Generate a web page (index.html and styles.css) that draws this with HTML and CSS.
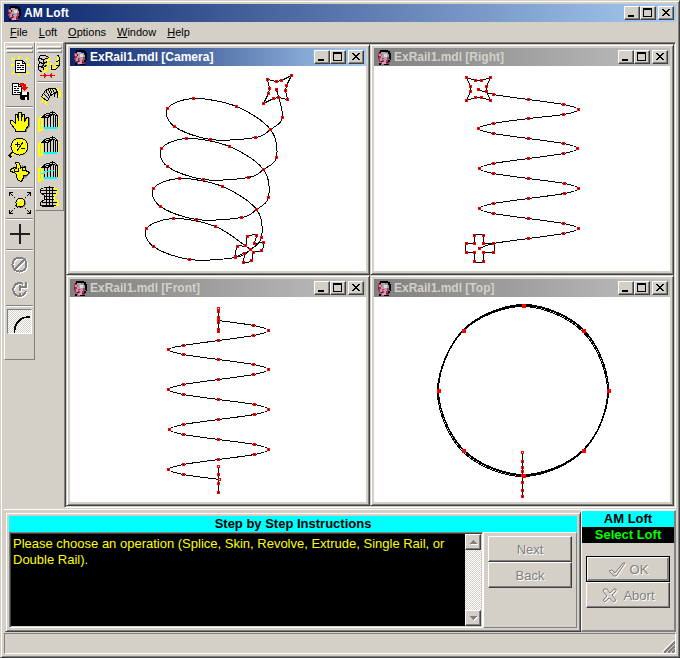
FILE: index.html
```html
<!DOCTYPE html>
<html lang="en">
<head>
<meta charset="utf-8">
<title>AM Loft</title>
<link rel="stylesheet" href="styles.css">
</head>
<body>
<svg class="defs" aria-hidden="true">
  <symbol id="logo" viewBox="0 0 16 16">
    <path fill="#a03a5c" d="M2 4h3v9H3v-2H2zM4 11h9v4H5v-2H4z"/>
    <path fill="#e58aa6" d="M3 5h2v2H3zM5 3h4v2H5zM4 9h2v3H4zM8 11h2v2H8z"/>
    <path fill="#000" d="M4 1h8v1h2v2h1v7h-1v-1h-1V5h-1V3H5v1H3V3h1z"/>
    <path fill="#a7a7a7" d="M6 4h6v2h1v4h-2v1H7v-1H5V7h1z"/>
    <path fill="#d8dcd8" d="M8 5h3v3H8z"/>
    <path fill="#d02a72" d="M11 8h2v3h-2zM6 9h2v1H6zM3 8h1v2H3z"/>
    <path fill="#5a1830" d="M5 12h2v1H5zM10 13h3v1h-3zM2 7h1v2H2z"/>
    <path fill="#d8a0b0" d="M6 13h4v2H6z"/>
    <path fill="#000" d="M3 14h2v2H3zM12 11h2v2h-2zM8 15h5v1H8z"/>
  </symbol>
  <symbol id="min" viewBox="0 0 12 10"><path fill="currentColor" d="M2 7h6v2H2z"/></symbol>
  <symbol id="max" viewBox="0 0 12 10"><path fill="currentColor" fill-rule="evenodd" d="M1 0h9v9H1zM2 2v6h7V2z"/></symbol>
  <symbol id="close" viewBox="0 0 12 10"><path fill="currentColor" d="M2 1h2v1h1v1h2V2h1V1h2v1H9v1H8v1H7v1h1v1h1v1h1v1H8V7H7V6H5v1H4v1H2V7h1V6h1V5h1V4H4V3H3V2H2z"/></symbol>
  <symbol id="loft" viewBox="0 0 25 25">
    <path class="cyan" d="M5 17h15v2H5z"/>
    <path class="yel" d="M2 8v14M2 8l3-1M3 21l3-3M5 9v9M21 7v10"/>
    <path class="ink" d="M4.500 7.500l5-4h3l3-2 3 2 2 2v11M4.500 7.500h7l4-3 5 1M7.500 7v10M10.500 8v9M13.500 6v11M16.500 5v12M18.500 5v12M9.500 3.500l6 1M12.500 3.500l-1 4M15.500 1.500v3M6.500 6.500l5-1"/>
  </symbol>
</svg>

<div class="window">
  <header class="titlebar">
    <svg class="logo"><use href="#logo"/></svg>
    <h1>AM Loft</h1>
    <div class="controls">
      <button type="button" aria-label="Minimize"><svg><use href="#min"/></svg></button>
      <button type="button" aria-label="Maximize"><svg><use href="#max"/></svg></button>
      <button type="button" class="close" aria-label="Close"><svg><use href="#close"/></svg></button>
    </div>
  </header>

  <nav class="menu">
    <button type="button"><u>F</u>ile</button>
    <button type="button"><u>L</u>oft</button>
    <button type="button"><u>O</u>ptions</button>
    <button type="button"><u>W</u>indow</button>
    <button type="button"><u>H</u>elp</button>
  </nav>

  <main class="workspace">
    <div class="toolbar toolbar-main" role="toolbar" aria-label="View">
      <span class="grip"></span><span class="grip"></span>
      <button type="button" aria-label="New"><svg viewBox="0 0 25 25">
        <path class="yel" stroke-dasharray="3 1" d="M5 4l3 3M12 2v4M21 4l-3 3M4 11h4M20 11h3M5 20l3-3M12 19v3M22 20l-4-4"/>
        <path fill="#fff" stroke="#000" d="M8.500 6.500h7l3 3v9h-10z"/><path class="ink" d="M15.500 6v3.500h3"/>
        <path class="ink" d="M10 9.500h3M10 11.500h2M13 11.500h4M10 13.500h4M15 13.500h2M10 15.500h2M13 15.500h4"/></svg></button>
      <button type="button" aria-label="Save"><svg viewBox="0 0 25 25">
        <path fill="#fff" stroke="#000" d="M5.500 4.500h6l3 3v8h-9z"/>
        <path class="ink" d="M7 7.500h3M7 9.500h2M10 9.500h2M7 11.500h5M7 13.500h2M10 13.500h3M11.500 4v3.500h3"/>
        <path fill="red" d="M13 4h4v1h2v3h2v1h-1v1h-1v1h-1v1h-1v-1h-1v-1h-1v-1h-1V8h2V7h-3z"/>
        <path fill="#000" d="M13 13h9v8h-8v-1h-1z"/><path fill="#fff" d="M15 13h5v3h-5zM18 18h2v3h-2z"/></svg></button>
      <hr>
      <button type="button" aria-label="Pan"><svg viewBox="0 0 25 25">
        <path fill="#808080" d="M22 8h1v8l-3 4v2h-2z"/>
        <path fill="#ff0" stroke="#000" d="M8.500 21.500v-2l-5-6v-3h2l3 3v-9h2l1 6v-8h3v8l1-6h2v7l2-4h2v8l-3 4v2z"/></svg></button>
      <button type="button" aria-label="Zoom"><svg viewBox="0 0 25 25">
        <path stroke="#000" stroke-width="3" d="M2 22l5-5"/><path class="yel" d="M4 21l3-3"/>
        <circle cx="13" cy="12" r="8.500" fill="#808080"/>
        <circle cx="12.500" cy="11.500" r="8.500" fill="#ff0" stroke="#000"/>
        <path fill="none" stroke="#fff" d="M6 9l3-3"/>
        <path class="ink" d="M8 9.500h5M10.500 7v5M10 16l6-9M14 13.500h4"/></svg></button>
      <button type="button" aria-label="Rotate"><svg viewBox="0 0 25 25">
        <path fill="#808080" d="M15 5l4 4 4 5-5 4-5 4v-3z"/>
        <path fill="#ff0" stroke="#000" d="M8.500 2.500h3l2 3v2h3l2-1v4l4 2-3 3h-3v2l-2 4-3-1-2-3v-3l-2-2-4-1v-2l4-2 2 1v-3z"/>
        <path class="ink" d="M7.500 9v2.500h4V8M15.500 7v3.500h4M13.500 6v3"/></svg></button>
      <hr>
      <button type="button" aria-label="Fit to window"><svg viewBox="0 0 25 25">
        <path stroke="#000" stroke-width="3" d="M9 16l2-2"/>
        <circle cx="14" cy="12" r="5" fill="#808080"/>
        <circle cx="13.500" cy="11.500" r="4.500" fill="#ff0" stroke="#000"/><path stroke="#fff" stroke-width="2" d="M11 10h2"/>
        <path fill="#000" d="M2 1h4v1H4v1H3v2H2zM24 1h-4v1h2v1h1v2h1zM2 23h4v-1H4v-1H3v-2H2zM24 23h-4v-1h2v-1h1v-2h1z"/>
        <path class="ink" stroke-dasharray="3 1" d="M4 3l4 4M22 3l-4 4M4 21l4-4M22 21l-4-4"/></svg></button>
      <hr>
      <button type="button" aria-label="Add"><svg viewBox="0 0 25 25">
        <path fill="none" stroke="#202020" stroke-width="2" d="M13 2v20M3 12h20"/></svg></button>
      <hr>
      <button type="button" disabled aria-label="Cancel"><svg viewBox="0 0 25 25">
        <g fill="none" stroke="#fff" stroke-width="2"><circle cx="13.500" cy="12.500" r="7"/><path d="M9 17l9-9"/></g>
        <g fill="none" stroke="#808080" stroke-width="2"><circle cx="12.500" cy="11.500" r="7"/><path d="M8 16l9-9"/></g></svg></button>
      <button type="button" disabled aria-label="Refresh"><svg viewBox="0 0 25 25">
        <g fill="none" stroke="#fff" stroke-width="2"><path d="M17 7a6.500 6.500 0 1 0 3 7M15 10h5V5M14 8v6M14 16v2"/></g>
        <g fill="none" stroke="#808080" stroke-width="2"><path d="M16 6a6.500 6.500 0 1 0 3 7M14 9h5V4M13 7v6M13 15v2"/></g></svg></button>
      <hr>
      <button type="button" class="pressed" aria-label="Smooth curve" aria-pressed="true"><svg viewBox="0 0 25 25">
        <path fill="none" stroke="#000" stroke-width="2" d="M7 25v-3C8 14 14 8 20 8h4"/></svg></button>
    </div>

    <div class="toolbar toolbar-loft" role="toolbar" aria-label="Loft">
      <span class="grip"></span><span class="grip"></span>
      <button type="button" aria-label="Splice"><svg viewBox="0 0 25 25">
        <path class="yel" d="M13 4l-3 3 1 3-3 3 2 2-4 4M21 2v5l-2 5-5 5M14 9v6"/>
        <path class="ink" d="M12.500 3.500l-5-2h-4l-2 3 1 4-1 3v4l4 3M2.500 4.500l4 1 6-2M2.500 8.500l4 1 4-2M2.500 12.500l4 1 4-3M6.500 5.500v4l-1 4 2 3M22.500 2.500v9l-4 4h-4v-5M22.500 6.500l-3 1M18.500 11.500l4 0M20.500 1.500l2 1"/>
        <path fill="red" d="M3 21h4v-2l3 2h1v1h-1l-3 2v-2H3zM18 21h-3v-2l-3 2h-1v1h1l3 2v-2h3z"/></svg></button>
      <hr>
      <button type="button" aria-label="Skin"><svg viewBox="0 0 25 25">
        <path class="yel" d="M5 11l2 3-3 4M8 16l2 4M12 4h8l3 3v4l-3 1"/>
        <path class="ink" d="M4.500 11.500l4-6 4-2h6M10.500 16.500l2-5 4-3 4-1M4.500 11.500l6 5M6.500 8.500l5 5M8.500 5.500l4 6M12.500 3.500l3 5M15.500 3.500l2 5v3M18.500 3.500l2 4v5M11.500 5.500l3 5"/></svg></button>
      <button type="button" aria-label="Revolve"><svg><use href="#loft"/></svg></button>
      <button type="button" aria-label="Extrude"><svg><use href="#loft"/></svg></button>
      <button type="button" aria-label="Single rail"><svg><use href="#loft"/><path class="cyan" d="M4 13h3v-2h5v-1h5v1h-4v1H8v2H4z"/></svg></button>
      <button type="button" aria-label="Double rail"><svg viewBox="0 0 25 25">
        <path class="yel" d="M16 2l4 3v3l-3 3v3l4 3v3l-4 1"/>
        <path class="ink" d="M6.500 2.500h10M3.500 5.500h16M4.500 8.500h14M7.500 11.500h9M7.500 14.500h9M4.500 17.500h15M3.500 20.500h15M6.500 2.500l-3 2v3l4 3v4l-4 3v3l4 1h9M9.500 2v20M12.500 1v21M15.500 2v18"/></svg></button>
    </div>

    <section class="mdi">
      <article class="view active">
        <header class="titlebar"><svg class="logo"><use href="#logo"/></svg><h2>ExRail1.mdl [Camera]</h2>
          <div class="controls"><button type="button" aria-label="Minimize"><svg><use href="#min"/></svg></button><button type="button" aria-label="Maximize"><svg><use href="#max"/></svg></button><button type="button" class="close" aria-label="Close"><svg><use href="#close"/></svg></button></div></header>
        <svg class="canvas" data-view="camera" viewBox="70 66 296 205"></svg>
      </article>
      <article class="view">
        <header class="titlebar"><svg class="logo"><use href="#logo"/></svg><h2>ExRail1.mdl [Right]</h2>
          <div class="controls"><button type="button" aria-label="Minimize"><svg><use href="#min"/></svg></button><button type="button" aria-label="Maximize"><svg><use href="#max"/></svg></button><button type="button" class="close" aria-label="Close"><svg><use href="#close"/></svg></button></div></header>
        <svg class="canvas" data-view="right" viewBox="374 66 296 205"></svg>
      </article>
      <article class="view">
        <header class="titlebar"><svg class="logo"><use href="#logo"/></svg><h2>ExRail1.mdl [Front]</h2>
          <div class="controls"><button type="button" aria-label="Minimize"><svg><use href="#min"/></svg></button><button type="button" aria-label="Maximize"><svg><use href="#max"/></svg></button><button type="button" class="close" aria-label="Close"><svg><use href="#close"/></svg></button></div></header>
        <svg class="canvas" data-view="front" viewBox="70 297 296 205"></svg>
      </article>
      <article class="view">
        <header class="titlebar"><svg class="logo"><use href="#logo"/></svg><h2>ExRail1.mdl [Top]</h2>
          <div class="controls"><button type="button" aria-label="Minimize"><svg><use href="#min"/></svg></button><button type="button" aria-label="Maximize"><svg><use href="#max"/></svg></button><button type="button" class="close" aria-label="Close"><svg><use href="#close"/></svg></button></div></header>
        <svg class="canvas" data-view="top" viewBox="374 297 296 205"></svg>
      </article>
    </section>
  </main>

  <section class="dock">
    <div class="guide">
      <h2 class="banner">Step by Step Instructions</h2>
      <div class="guide-body">
        <div class="message">
          <p>Please choose an operation (Splice, Skin, Revolve, Extrude, Single Rail, or Double Rail).</p>
          <div class="scroll">
            <button type="button" disabled aria-label="Scroll up"><svg viewBox="0 0 12 12"><path fill="#fff" d="M3 9l4-4 4 4z"/><path fill="#808080" d="M2 8l4-4 4 4z"/></svg></button>
            <button type="button" disabled aria-label="Scroll down"><svg viewBox="0 0 12 12"><path fill="#fff" d="M3 5l4 4 4-4z"/><path fill="#808080" d="M2 4l4 4 4-4z"/></svg></button>
          </div>
        </div>
        <div class="steps">
          <button type="button" class="push" disabled>Next</button>
          <button type="button" class="push" disabled>Back</button>
        </div>
      </div>
    </div>
    <aside class="side">
      <h2 class="banner">AM Loft</h2>
      <p class="mode">Select Loft</p>
      <div class="actions">
        <button type="button" class="push default" disabled><svg viewBox="0 0 18 18"><g fill="none"><path stroke="#fff" d="M2 11l3-1 3 3 8-10h2L9 16H7z"/><path stroke="#808080" d="M1 10l3-1 3 3 8-10h2L8 15H6z"/></g></svg>OK</button>
        <button type="button" class="push" disabled><svg viewBox="0 0 18 18"><g fill="none"><path stroke="#fff" d="M4 3h3l3 4 4-4h2v2l-4 4 4 5-2 2-5-4-4 4-2-2 4-4-4-5z"/><path stroke="#808080" d="M3 2h3l3 4 4-4h2v2l-4 4 4 5-2 2-5-4-4 4-2-2 4-4-4-5z"/></g></svg>Abort</button>
      </div>
    </aside>
  </section>

  <footer class="status"><svg viewBox="0 0 13 13"><path stroke="#fff" d="M0 12L12 0M4 12l8-8M8 12l4-4"/><path stroke="#808080" stroke-width="2" d="M2 13L13 2M6 13l7-7M10 13l3-3"/></svg></footer>
</div>
<script src="views.js"></script>
</body>
</html>
```

FILE: styles.css
```css
:root {
  --face: #d4d0c8;
  --shadow: #808080;
  --dark: #404040;
}

* { box-sizing: border-box; }

body {
  margin: 0;
  background: var(--face);
  color: #000;
  font-family: "Liberation Sans", Arial, sans-serif;
  font-size: 13px;
  line-height: 16px;
}

h1, h2, p { margin: 0; font-size: inherit; }
button {
  margin: 0;
  padding: 0;
  border: 0;
  background: var(--face);
  color: #000;
  font: inherit;
}
svg { display: block; shape-rendering: crispEdges; }
.defs { position: absolute; width: 0; height: 0; }

.ink, .yel { fill: none; stroke: #000; }
.yel { stroke: #ff0; stroke-width: 2; }
.cyan { fill: #0ff; }

.window, .view, .guide {
  border: 1px solid;
  border-color: var(--face) var(--dark) var(--dark) var(--face);
  box-shadow: inset 1px 1px #fff, inset -1px -1px var(--shadow);
}

.window {
  display: flex;
  flex-direction: column;
  min-height: 100vh;
  padding: 3px;
}

/* Title bars */
.titlebar {
  display: flex;
  align-items: center;
  flex: none;
  gap: 2px;
  height: 18px;
  padding: 0 2px;
  background: linear-gradient(to right, #808080, #c0c0c0);
  color: var(--face);
  font-size: 12px;
}
.window > .titlebar, .active .titlebar {
  background: linear-gradient(to right, #0a246a, #a6caf0);
  color: #fff;
}
.logo { width: 16px; height: 16px; }
.controls { display: flex; margin-left: auto; }
.controls button, .scroll button, .push {
  border: 1px solid;
  border-color: #fff var(--dark) var(--dark) #fff;
  box-shadow: inset -1px -1px var(--shadow);
}
.controls button { width: 16px; height: 14px; padding: 1px; }
.controls .close { margin-left: 2px; }
.controls svg { width: 12px; height: 10px; }

.menu {
  display: flex;
  flex: none;
  gap: 11px;
  height: 20px;
  padding-left: 6px;
  font-size: 11px;
}

/* Toolbars */
.workspace { display: flex; flex: 1; }
.toolbar {
  display: flex;
  flex-direction: column;
  align-self: flex-start;
  align-items: center;
  border: 1px solid;
  border-color: #fff var(--shadow) var(--shadow) #fff;
  padding: 3px 1px 0;
}
.toolbar-main { width: 31px; min-height: 318px; }
.toolbar-loft { width: 29px; min-height: 169px; }
.toolbar button { width: 25px; height: 25px; }
.toolbar svg { width: 25px; height: 25px; }
.grip {
  width: 100%;
  height: 3px;
  margin-bottom: 1px;
  border: 1px solid;
  border-color: #fff var(--shadow) var(--shadow) #fff;
}
.toolbar hr {
  width: 100%;
  height: 2px;
  margin: 2px 0;
  border: 0;
  border-top: 1px solid var(--shadow);
  border-bottom: 1px solid #fff;
}
.toolbar .pressed {
  border: 1px solid;
  border-color: var(--shadow) #fff #fff var(--shadow);
  background: repeating-conic-gradient(#fff 0 25%, var(--face) 0 50%) 0 0 / 2px 2px;
}
.pressed svg { width: 23px; height: 23px; }

/* Model views */
.mdi {
  display: grid;
  flex: 1;
  grid-template-columns: 1fr 1fr;
  grid-template-rows: 1fr 1fr;
  border: 1px solid;
  border-color: var(--shadow) #fff #fff var(--shadow);
  box-shadow: inset 1px 1px var(--dark);
  padding: 1px;
}
.view { display: flex; flex-direction: column; padding: 3px; min-width: 0; background: var(--face); }
.canvas { flex: 1; width: 100%; min-height: 0; background: #fff; fill: none; stroke: #000; }
.canvas .mark { stroke: #f00; }
.canvas .bold { stroke: #f00; stroke-width: 2; }

/* Instructions and actions */
.dock { display: flex; flex: none; height: 123px; margin: 1px 0; border-top: 1px solid #fff; }
.guide {
  display: flex;
  flex: 1;
  flex-direction: column;
  margin: 2px 0 0 1px;
  padding: 3px;
}
.banner { background: #0ff; text-align: center; }
.guide-body { display: flex; flex: 1; }
.message {
  display: flex;
  flex: 1;
  border: 1px solid;
  border-color: var(--shadow) #fff #fff var(--shadow);
  box-shadow: inset 1px 1px var(--dark);
  padding: 1px;
  background: #000;
  background-clip: content-box;
  color: #ff0;
}
.message p { flex: 1; padding: 2px; }
.scroll {
  display: flex;
  flex-direction: column;
  justify-content: space-between;
  width: 16px;
  background: repeating-conic-gradient(#fff 0 25%, var(--face) 0 50%) 0 0 / 2px 2px;
}
.scroll button { height: 16px; padding: 1px; }
.scroll svg { width: 12px; height: 12px; }
.steps {
  display: flex;
  flex-direction: column;
  width: 94px;
  border: 1px solid;
  border-color: #fff var(--shadow) var(--shadow) #fff;
  padding: 3px 4px;
}
.push {
  display: flex;
  align-items: center;
  justify-content: center;
  gap: 4px;
  width: 100%;
  height: 26px;
  padding-top: 2px;
}
.push:disabled { color: var(--shadow); text-shadow: 1px 1px #fff; }
.push svg { width: 18px; height: 18px; shape-rendering: auto; }
.push.default { outline: 1px solid #000; outline-offset: -1px; border-width: 2px; border-color: #fff var(--shadow) var(--shadow) #fff; }
.side {
  width: 95px;
  border: 1px solid #fff;
  border-right: 2px solid var(--shadow);
  border-bottom: 2px solid var(--shadow);
}
.mode { background: #000; color: #0f0; font-weight: bold; text-align: center; }
.actions { padding: 13px 4px 0; }

.status {
  display: flex;
  flex: none;
  align-items: flex-end;
  justify-content: flex-end;
  height: 21px;
  border: 1px solid;
  border-color: var(--shadow) #fff #fff var(--shadow);
}
.status svg { width: 13px; height: 13px; }
```

FILE: views.js
```js
// Each view lists its shapes as control points: smooth splines or straight polygons.
const views = {
  camera: [
    { smooth: true, points: [[276,89],[282,117],[270,129],[255,137],[210,139],[174,126],[167,108],[193,98],[236,106],[270,129],[276,157],[263,169],[248,177],[203,179],[167,166],[161,148],[186,138],[229,146],[263,169],[268,197],[256,209],[241,217],[196,219],[160,206],[153,188],[179,178],[222,186],[256,209],[261,237],[250,249],[235,257],[189,259],[153,246],[146,228],[173,218],[215,226],[250,249]] },
    { closed: true, points: [[267,79],[276,81],[281,80],[291,75],[286,85],[285,90],[287,99],[278,97],[273,98],[263,103],[268,93],[269,88]] },
    { closed: true, smooth: true, points: [[247,236],[256,235],[254,243],[263,242],[261,250],[253,252],[251,260],[243,262],[244,253],[235,256],[237,246],[245,245]] }
  ],
  right: [
    { smooth: true, points: [[478,89],[493,94],[528,99],[563,104],[578,109],[563,114],[528,118],[493,123],[478,128],[493,133],[528,138],[563,143],[577,148],[563,153],[528,158],[493,163],[479,168],[493,173],[528,178],[564,183],[578,188],[564,193],[528,198],[493,203],[479,208],[493,213],[528,218],[563,223],[578,228],[563,233],[528,238],[493,243],[479,248]] },
    { closed: true, points: [[466,77],[475,80],[481,80],[490,77],[486,86],[486,91],[490,100],[481,97],[475,97],[466,100],[470,91],[470,86]] },
    { closed: true, smooth: true, points: [[474,235],[483,235],[483,243],[493,243],[493,252],[483,252],[483,261],[474,261],[474,252],[466,252],[466,243],[474,243]] }
  ],
  front: [
    { smooth: true, points: [[218,320],[253,325],[268,330],[253,335],[218,340],[183,345],[168,349],[183,354],[218,359],[253,364],[268,369],[253,374],[218,379],[183,384],[168,389],[183,394],[218,399],[254,404],[268,409],[254,414],[218,419],[183,424],[169,429],[183,434],[218,439],[254,444],[268,449],[254,454],[218,459],[183,464],[168,469],[183,474],[219,479]] },
    { points: [[218,308],[218,311],[218,317],[218,322],[218,329],[218,331]] },
    { points: [[218,466],[218,474],[218,483],[218,492]] }
  ],
  top: [
    { smooth: true, closed: true, coils: [[0,-1],[0,0],[-1,1]], points: [[523,305],[583,330],[608,390],[583,450],[523,475],[463,450],[438,390],[463,330]] },
    { points: [[522,452],[522,461],[522,467],[522,471],[522,475],[522,482],[522,490],[522,496]] }
  ]
};

function splinePath(points, closed) {
  const n = points.length;
  const at = i => closed ? points[(i + n) % n] : points[Math.max(0, Math.min(n - 1, i))];
  let d = `M${points[0]}`;
  for (let i = 0; i < (closed ? n : n - 1); i++) {
    const [a, b, c, e] = [at(i - 1), at(i), at(i + 1), at(i + 2)];
    d += `C${b[0] + (c[0] - a[0]) / 6},${b[1] + (c[1] - a[1]) / 6} ${c[0] - (e[0] - b[0]) / 6},${c[1] - (e[1] - b[1]) / 6} ${c}`;
  }
  return d;
}

function addPath(svg, d, className, [dx, dy] = [0, 0]) {
  const path = document.createElementNS('http://www.w3.org/2000/svg', 'path');
  path.setAttribute('d', d);
  path.setAttribute('transform', `translate(${dx + 0.5} ${dy + 0.5})`);
  if (className) path.setAttribute('class', className);
  svg.append(path);
}

for (const svg of document.querySelectorAll('.canvas')) {
  const shapes = views[svg.dataset.view];
  // Coils seen from above almost coincide, so each one is drawn slightly shifted.
  for (const { points, closed, smooth, coils = [[0, 0]] } of shapes) {
    const d = smooth ? splinePath(points, closed) : `M${points.join('L')}${closed ? 'Z' : ''}`;
    for (const shift of coils) addPath(svg, d, '', shift);
  }
  for (const { points, coils } of shapes) {
    addPath(svg, points.map(([x, y]) => `M${x - 1},${y - 1}h2v2h-2z`).join(''), coils ? 'bold' : 'mark');
  }
}
```
